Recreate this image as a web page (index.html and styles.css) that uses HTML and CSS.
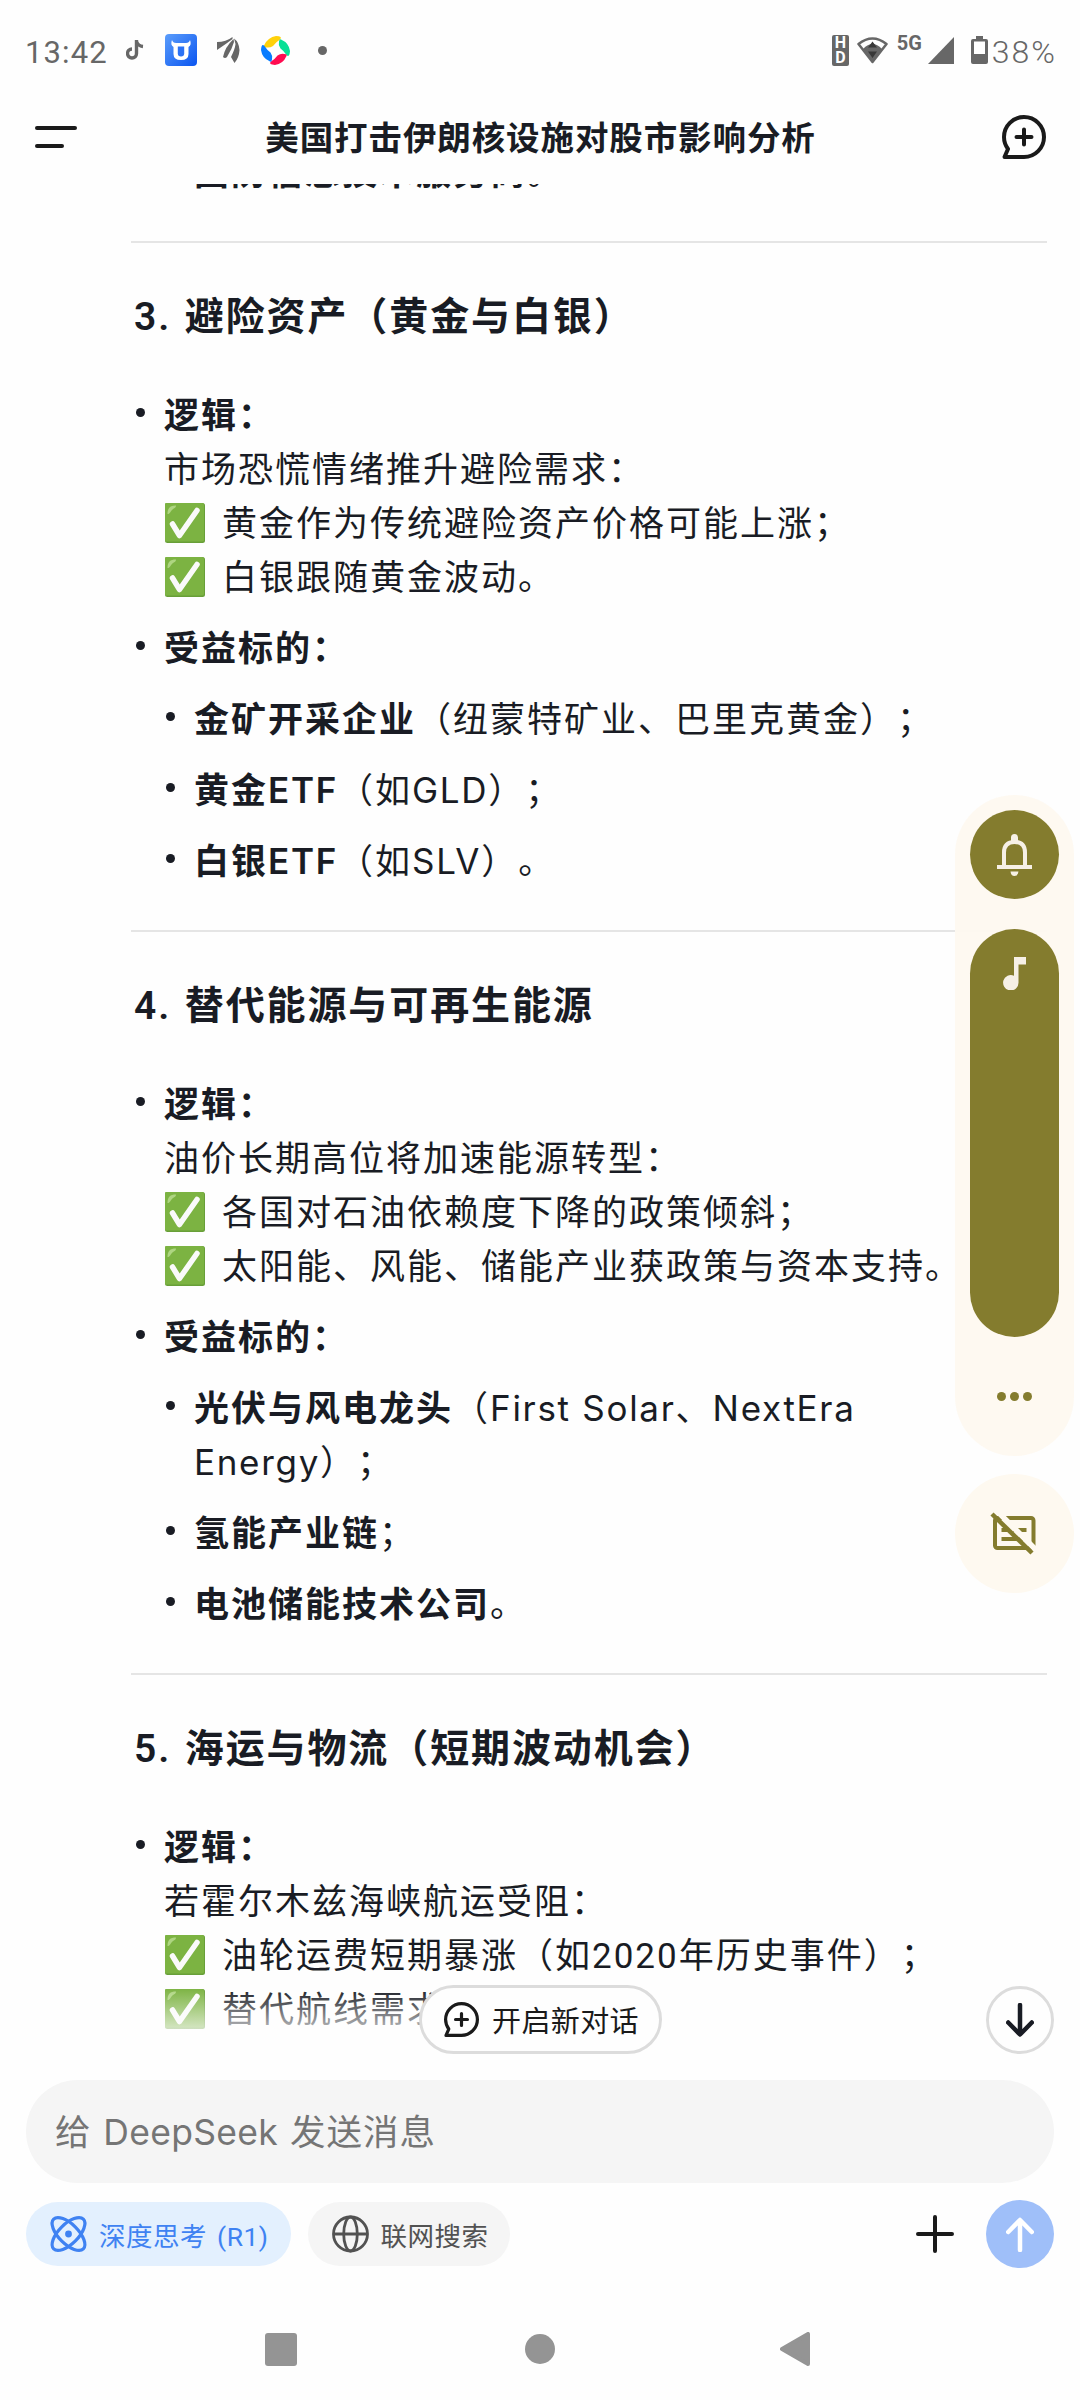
FILE: index.html
```html
<!DOCTYPE html>
<html lang="zh-CN">
<head>
  <meta charset="UTF-8">
  <meta name="viewport" content="width=device-width, initial-scale=1.0">
  <title>美国打击伊朗核设施对股市影响分析</title>
  <link rel="stylesheet" href="styles.css">
</head>
<body>

  <!-- Shared icons -->
  <svg class="icon-defs" width="0" height="0">
    <symbol id="icon-check" viewBox="0 0 40 40">
      <rect width="40" height="40" rx="2.5" fill="#689f38"/>
      <path d="M1 0H37Q39 0 39 2V37Q39 38.500 37 38.500H1Q0 38.500 0 37V1Q0 0 1 0Z" fill="#7cb342"/>
      <path d="M2.500 11C2.500 5 5 2.500 11 2.500C11 5 9 5 7 7C5 9 5 11 2.500 11Z" fill="#aed581"/>
      <path d="M7.500 21L14.500 32.500L32 7.500" fill="none" stroke="#fafafa" stroke-width="5.500" stroke-linecap="round" stroke-linejoin="round"/>
    </symbol>
    <symbol id="icon-new-chat" viewBox="0 0 44 44">
      <path d="M22 2A20 20 0 0 1 22 42H2.500L6 34Q2 28.500 2 22A20 20 0 0 1 22 2Z" fill="none" stroke="currentColor" stroke-width="4" stroke-linejoin="round"/>
      <path d="M22 14.500V29.500M14.500 22H29.500" stroke="currentColor" stroke-width="4" stroke-linecap="round"/>
    </symbol>
  </svg>

  <!-- Status Bar -->
  <div class="status-bar">
    <span class="status-time">13:42</span>
    <svg class="status-note" width="18" height="20" viewBox="0 0 18 20">
      <path d="M10.500 0V13.500A4.500 4.500 0 1 1 6 9M10.500 1.500Q12 6 17 6.500" fill="none" stroke="#676767" stroke-width="3.400"/>
    </svg>
    <svg class="status-bull" width="32" height="32" viewBox="0 0 32 32">
      <defs>
        <linearGradient id="bull-bg" x1="0" y1="0" x2="1" y2="1">
          <stop offset="0" stop-color="#5b9dfb"/>
          <stop offset="1" stop-color="#0a55f0"/>
        </linearGradient>
      </defs>
      <rect width="32" height="32" rx="4" fill="url(#bull-bg)"/>
      <path d="M7 6Q8 9.500 12 9H20Q24 9.500 25 6Q27 11 23.500 13V20Q23.500 26 16 26Q8.500 26 8.500 20V13Q5 11 7 6Z" fill="#fff"/>
      <path d="M12.800 12.500H19.200V19.500Q19.200 22.500 16 22.500Q12.800 22.500 12.800 19.500Z" fill="#2b72f5"/>
    </svg>
    <svg class="status-leaf" width="23" height="26" viewBox="0 0 23 26" fill="#676767">
      <path d="M0 5Q9 5 15.500 0L15.500 2Q9 7 0 13Z"/>
      <path d="M6 20Q8 10 16.500 2L17 5Q15 12 10 20Q8 22 6 20Z"/>
      <path d="M17 1.500Q22 5 22.500 13Q22 21 17.500 26L14 20Q18 12 18.500 7Z"/>
    </svg>
    <svg class="status-ring" width="29" height="29" viewBox="0 0 29 29">
      <path d="M3 9.500Q7 1 15 0Q22 0 19 3.500Q15 6 12 10Q9 12 5.500 11.500Q2 11.500 3 9.500Z" fill="#ffd10a"/>
      <path d="M20 3.500Q28 7 29 15Q28.500 22 25.500 19Q23 15 19.500 12.500Q17 9 18 5.500Q18.500 2.500 20 3.500Z" fill="#08e096"/>
      <path d="M25.500 20Q22 28 14 29Q7 28.500 10 25.500Q14 23 16.500 19.500Q20 17 23.500 18Q26.500 18 25.500 20Z" fill="#ff0b50"/>
      <path d="M9 25.500Q1 22 0 14Q.5 7 3.500 10Q6 14 9.500 16.500Q12 20 11 23.500Q10.500 26.500 9 25.500Z" fill="#087cff"/>
    </svg>
    <span class="status-dot"></span>

    <span class="status-hd"><b>H</b><b>D</b></span>
    <svg class="status-wifi" width="31" height="27" viewBox="0 0 31 27">
      <path d="M1.500 7Q15.500 -4 29.500 7L15.500 25Z" fill="none" stroke="#676767" stroke-width="2.500" stroke-linejoin="round"/>
      <path d="M6 12Q15.500 2 25 12L15.500 25Z" fill="#676767"/>
      <path d="M15.500 4.500L20 10.500H11ZM11 14.500H20L15.500 21Z" fill="#383838"/>
    </svg>
    <span class="status-5g">5G</span>
    <svg class="status-signal" width="26" height="27" viewBox="0 0 26 27"><path d="M26 0V27H0Z" fill="#676767"/></svg>
    <svg class="status-battery" width="17" height="28" viewBox="0 0 17 28">
      <path d="M5 0H12V3H15Q17 3 17 5V26Q17 28 15 28H2Q0 28 0 26V5Q0 3 2 3H5Z" fill="#676767"/>
      <rect x="3" y="5.500" width="11" height="12.500" fill="#fff"/>
    </svg>
    <span class="status-percent">38%</span>
  </div>

  <!-- Header Section -->
  <header class="chat-header">
    <button class="menu-button" aria-label="菜单"><span></span><span></span></button>
    <h1>美国打击伊朗核设施对股市影响分析</h1>
    <svg class="header-new" width="44" height="44"><use href="#icon-new-chat"/></svg>
  </header>

  <!-- Chat Section -->
  <main class="chat">
    <div class="answer">
      <ul class="nested clipped">
        <li><strong>国防信息技术服务商</strong>。</li>
      </ul>

      <hr>

      <h3>3. 避险资产（黄金与白银）</h3>
      <ul>
        <li><strong>逻辑：</strong><br>
          市场恐慌情绪推升避险需求：<br>
          <svg class="check"><use href="#icon-check"/></svg>黄金作为传统避险资产价格可能上涨；<br>
          <svg class="check"><use href="#icon-check"/></svg>白银跟随黄金波动。
        </li>
        <li><strong>受益标的：</strong>
          <ul class="nested">
            <li><strong>金矿开采企业</strong>（纽蒙特矿业、巴里克黄金）；</li>
            <li><strong>黄金<span class="latin">ETF</span></strong>（如<span class="latin">GLD</span>）；</li>
            <li><strong>白银<span class="latin">ETF</span></strong>（如<span class="latin">SLV</span>）。</li>
          </ul>
        </li>
      </ul>

      <hr>

      <h3>4. 替代能源与可再生能源</h3>
      <ul>
        <li><strong>逻辑：</strong><br>
          油价长期高位将加速能源转型：<br>
          <svg class="check"><use href="#icon-check"/></svg>各国对石油依赖度下降的政策倾斜；<br>
          <svg class="check"><use href="#icon-check"/></svg>太阳能、风能、储能产业获政策与资本支持。
        </li>
        <li><strong>受益标的：</strong>
          <ul class="nested">
            <li><strong>光伏与风电龙头</strong>（<span class="latin">First Solar</span>、<span class="latin">NextEra<br>Energy</span>）；</li>
            <li><strong>氢能产业链</strong>；</li>
            <li><strong>电池储能技术公司</strong>。</li>
          </ul>
        </li>
      </ul>

      <hr>

      <h3>5. 海运与物流（短期波动机会）</h3>
      <ul>
        <li><strong>逻辑：</strong><br>
          若霍尔木兹海峡航运受阻：<br>
          <svg class="check"><use href="#icon-check"/></svg>油轮运费短期暴涨（如2020年历史事件）；<br>
          <svg class="check"><use href="#icon-check"/></svg>替代航线需求
        </li>
      </ul>
    </div>

    <div class="chat-fade"></div>
    <button class="new-chat-pill">
      <svg width="35" height="35" viewBox="0 0 44 44"><use href="#icon-new-chat" width="44" height="44"/></svg>
      开启新对话
    </button>
    <button class="scroll-down" aria-label="滚动到底部">
      <svg width="28" height="34" viewBox="0 0 28 34"><path d="M14 2V31M2.200 19.500L14 31.500L25.800 19.500"/></svg>
    </button>
  </main>

  <!-- Composer Section -->
  <footer class="composer">
    <div class="message-input">给 <span class="brand">DeepSeek</span> 发送消息</div>
    <div class="composer-row">
      <button class="chip active">
        <svg width="35" height="36" viewBox="0 0 35 36" fill="none" stroke="currentColor" stroke-width="3.200">
          <ellipse cx="17.500" cy="18" rx="21" ry="9.800" transform="rotate(45 17.500 18)"/>
          <ellipse cx="17.500" cy="18" rx="21" ry="9.800" transform="rotate(-45 17.500 18)"/>
          <circle cx="17.500" cy="18" r="3.400" fill="currentColor" stroke="none"/>
        </svg>
        深度思考 (R1)
      </button>
      <button class="chip">
        <svg width="37" height="38" viewBox="0 0 37 38" fill="none" stroke="currentColor" stroke-width="2.800">
          <circle cx="18.500" cy="19" r="17"/>
          <ellipse cx="18.500" cy="19" rx="6.800" ry="17"/>
          <path d="M1.500 19H35.500"/>
        </svg>
        联网搜索
      </button>
      <svg class="attach" width="38" height="38" viewBox="0 0 38 38"><path d="M19 2V36M2 19H36"/></svg>
      <button class="send-button" aria-label="发送">
        <svg width="28" height="35" viewBox="0 0 28 35"><path d="M14 33V3.500M2.200 15L14 3L25.800 15"/></svg>
      </button>
    </div>
  </footer>

  <!-- Android Navigation -->
  <nav class="nav-bar">
    <span class="nav-recent"></span>
    <span class="nav-home"></span>
    <svg class="nav-back" width="30" height="34" viewBox="0 0 30 34"><path d="M28 2V32L2 17Z"/></svg>
  </nav>

  <!-- Volume Overlay -->
  <div class="volume-overlay">
    <div class="volume-panel">
      <div class="ringer">
        <svg width="35" height="42" viewBox="0 0 35 42">
          <path d="M7 33V18.500Q7 8 17.500 8Q28 8 28 18.500V33" fill="none" stroke="#f6f0e6" stroke-width="4"/>
          <path d="M0 31H35V35H0ZM13.500 37.500H21.500Q21 42 17.500 42Q14 42 13.500 37.500ZM14 7V3.500Q14 0 17.500 0Q21 0 21 3.500V7Z" fill="#f6f0e6"/>
        </svg>
      </div>
      <div class="slider">
        <svg width="23" height="33" viewBox="0 0 23 33">
          <path d="M11 0H23V7.500H15.500V25.500A7.700 7.700 0 1 1 11 18.700Z" fill="#f6f0e6"/>
        </svg>
      </div>
      <div class="more"><span></span><span></span><span></span></div>
    </div>
    <div class="caption-button">
      <svg width="46" height="43" viewBox="0 0 46 43">
        <g fill="none" stroke="#847c2e" stroke-width="4">
          <rect x="5" y="6" width="38.500" height="30" rx="2.500"/>
          <path d="M11.500 18H18M23 18H36.500M11.500 27H36.500"/>
        </g>
        <path d="M5 -3L48 40" stroke="#fef9f0" stroke-width="5.500"/>
        <path d="M2 2L42 41" stroke="#847c2e" stroke-width="4.500"/>
      </svg>
    </div>
  </div>

</body>
</html>
```
FILE: styles.css
```css
/* General styles */
* {
  box-sizing: border-box;
}

body {
  position: relative;
  display: flex;
  flex-direction: column;
  width: 1080px;
  height: 2400px;
  margin: 0;
  overflow: hidden;
  background: #fefefe;
  color: #191c24;
  font-family: Roboto, 'Noto Sans CJK SC', sans-serif;
  text-spacing-trim: space-all;
}

button {
  margin: 0;
  padding: 0;
  border: none;
  background: none;
  color: inherit;
  font-family: inherit;
}

svg {
  display: block;
  flex: none;
}

.icon-defs {
  position: absolute;
}

/* Status bar */
.status-bar {
  display: flex;
  align-items: center;
  flex: none;
  height: 100px;
  padding: 0 23px 0 25px;
  color: #676767;
  font-size: 31px;
  letter-spacing: 1.1px;
}

.status-time {
  width: 101px;
  padding-top: 4px;
}

.status-note {
  margin-right: 21px;
}

.status-bull {
  margin-right: 20px;
}

.status-leaf {
  margin-right: 21px;
}

.status-ring {
  margin-right: 28px;
}

.status-dot {
  width: 9px;
  height: 9px;
  margin-right: auto;
  border-radius: 50%;
  background: #676767;
}

.status-hd {
  display: flex;
  flex-direction: column;
  width: 17px;
  height: 31px;
  margin-right: 8px;
  border-radius: 2px;
  background: #676767;
  color: #fff;
  font-size: 16px;
  line-height: 15px;
  letter-spacing: 0;
  text-align: center;
}

.status-wifi {
  margin-right: 9px;
}

.status-5g {
  width: 31px;
  margin-bottom: 14px;
  font-size: 20px;
  font-weight: 700;
  letter-spacing: 0;
}

.status-signal {
  margin-right: 17px;
}

.status-battery {
  margin-right: 4px;
}

.status-percent {
  padding-top: 4px;
  font-size: 32px;
  font-weight: 300;
  letter-spacing: 2px;
}

/* Header */
.chat-header {
  display: flex;
  align-items: center;
  justify-content: space-between;
  flex: none;
  height: 84px;
  padding: 0 34px 10px 35px;
}

.menu-button {
  display: flex;
  flex-direction: column;
  gap: 14px;
  width: 44px;
}

.menu-button span {
  width: 42px;
  height: 4px;
  border-radius: 2px;
  background: #1a1a1a;
}

.menu-button span:last-child {
  width: 29px;
}

h1 {
  margin: 3px 0 0;
  font-size: 33.5px;
  font-weight: 600;
  line-height: 40px;
  letter-spacing: 0.9px;
}

.header-new {
  color: #1a1a1a;
}

/* Chat */
.chat {
  position: relative;
  flex: none;
  height: 1896px;
  overflow: hidden;
}

.answer {
  padding: 0 33px 0 131px;
  font-size: 35px;
  line-height: 54.2px;
  letter-spacing: 2px;
}

.answer hr {
  height: 2px;
  margin: 39.5px 0 44px;
  border: none;
  background: #e5e5e5;
}

.answer h3 {
  margin: 0 0 43px 3px;
  font-size: 39px;
  font-weight: 600;
  line-height: 60px;
  letter-spacing: 1.9px;
  word-spacing: 2px;
}

.answer strong {
  font-weight: 600;
}

.latin {
  font-family: Inter, sans-serif;
  line-height: 1;
  letter-spacing: 1.7px;
}

.answer ul {
  margin: 0;
  padding: 0 0 0 33px;
  list-style: none;
}

.answer ul.nested {
  padding-left: 30px;
}

.answer ul.clipped {
  margin-top: -37px;
  padding-left: 63px;
}

.answer li + li,
.answer li .nested li {
  margin-top: 16.7px;
}

.answer li::before {
  content: "";
  display: inline-block;
  width: 9px;
  height: 9px;
  margin: 0 19px 0 -28px;
  border-radius: 50%;
  background: #191c24;
  vertical-align: 11px;
}

.check {
  display: inline-block;
  width: 40px;
  height: 40px;
  margin: 0 17px 0 1px;
  vertical-align: -7px;
}

.chat-fade {
  position: absolute;
  right: 0;
  bottom: 0;
  left: 0;
  height: 92px;
  background: linear-gradient(to bottom, rgba(254, 254, 254, 0), #fefefe 60px);
}

.new-chat-pill {
  position: absolute;
  bottom: 26px;
  left: 419px;
  display: flex;
  align-items: center;
  gap: 13px;
  width: 243px;
  height: 69px;
  padding: 0 0 1px 22px;
  border: 3px solid #dcdcdc;
  border-radius: 35px;
  background: #fefefe;
  color: #1a1a1a;
  font-size: 29px;
  letter-spacing: 0.4px;
  white-space: nowrap;
}

.scroll-down {
  position: absolute;
  right: 26px;
  bottom: 26px;
  display: flex;
  align-items: center;
  justify-content: center;
  width: 68px;
  height: 68px;
  border: 3px solid #dcdcdc;
  border-radius: 50%;
  background: #fefefe;
}

.scroll-down path,
.send-button path,
.attach path {
  fill: none;
  stroke: #191c24;
  stroke-width: 4.5;
  stroke-linecap: round;
  stroke-linejoin: round;
}

/* Composer */
.composer {
  flex: none;
  height: 218px;
  padding: 0 26px;
}

.message-input {
  height: 103px;
  padding-left: 29px;
  border-radius: 52px;
  background: #f5f5f5;
  color: #757575;
  font-size: 35.5px;
  line-height: 106px;
  letter-spacing: 1px;
  word-spacing: 2px;
}

.brand {
  font-family: Inter, sans-serif;
  line-height: 1;
  letter-spacing: 0.3px;
}

.composer-row {
  display: flex;
  align-items: center;
  margin-top: 17px;
}

.chip {
  display: flex;
  align-items: center;
  gap: 12px;
  height: 64px;
  margin-right: 17px;
  padding: 0 21px 0 24px;
  border-radius: 32px;
  background: #f5f5f5;
  color: #525252;
  font-size: 26.5px;
  letter-spacing: 0.5px;
  word-spacing: 3px;
  white-space: nowrap;
}

.chip.active {
  padding: 0 22px 0 25px;
  gap: 13px;
  background: #e3f0fe;
  color: #3f82f2;
}

.chip svg {
  overflow: visible;
}

.attach {
  margin: 0 32px 0 auto;
}

.attach path {
  stroke: #1a1a1a;
  stroke-width: 4;
}

.send-button {
  display: flex;
  align-items: center;
  justify-content: center;
  width: 68px;
  height: 68px;
  border-radius: 50%;
  background: #9fbff9;
}

.send-button path {
  stroke: #fff;
}

/* Android navigation */
.nav-bar {
  display: flex;
  align-items: center;
  justify-content: space-between;
  flex: 1;
  padding: 0 270px 0 265px;
}

.nav-recent {
  width: 32px;
  height: 33px;
  border-radius: 3px;
  background: #949494;
}

.nav-home {
  width: 30px;
  height: 30px;
  margin-left: 2px;
  border-radius: 50%;
  background: #949494;
}

.nav-back path {
  fill: #949494;
  stroke: #949494;
  stroke-width: 4;
  stroke-linejoin: round;
}

/* Volume overlay */
.volume-overlay {
  position: absolute;
  top: 795px;
  right: 6px;
  display: flex;
  flex-direction: column;
  gap: 18px;
  width: 119px;
}

.volume-panel {
  display: flex;
  flex-direction: column;
  align-items: center;
  height: 661px;
  padding-top: 15px;
  border-radius: 60px;
  background: rgba(254, 249, 240, 0.96);
}

.ringer {
  display: flex;
  align-items: center;
  justify-content: center;
  width: 89px;
  height: 89px;
  border-radius: 50%;
  background: #847c2e;
}

.slider {
  display: flex;
  justify-content: center;
  width: 89px;
  height: 408px;
  margin: 30px 0 55px;
  padding-top: 28px;
  border-radius: 45px;
  background: #847c2e;
}

.more {
  display: flex;
  gap: 4px;
}

.more span {
  width: 9px;
  height: 9px;
  border-radius: 50%;
  background: #847c2e;
}

.caption-button {
  display: flex;
  align-items: center;
  justify-content: center;
  height: 119px;
  padding-right: 3px;
  border-radius: 50%;
  background: #fef9f0;
}
```
